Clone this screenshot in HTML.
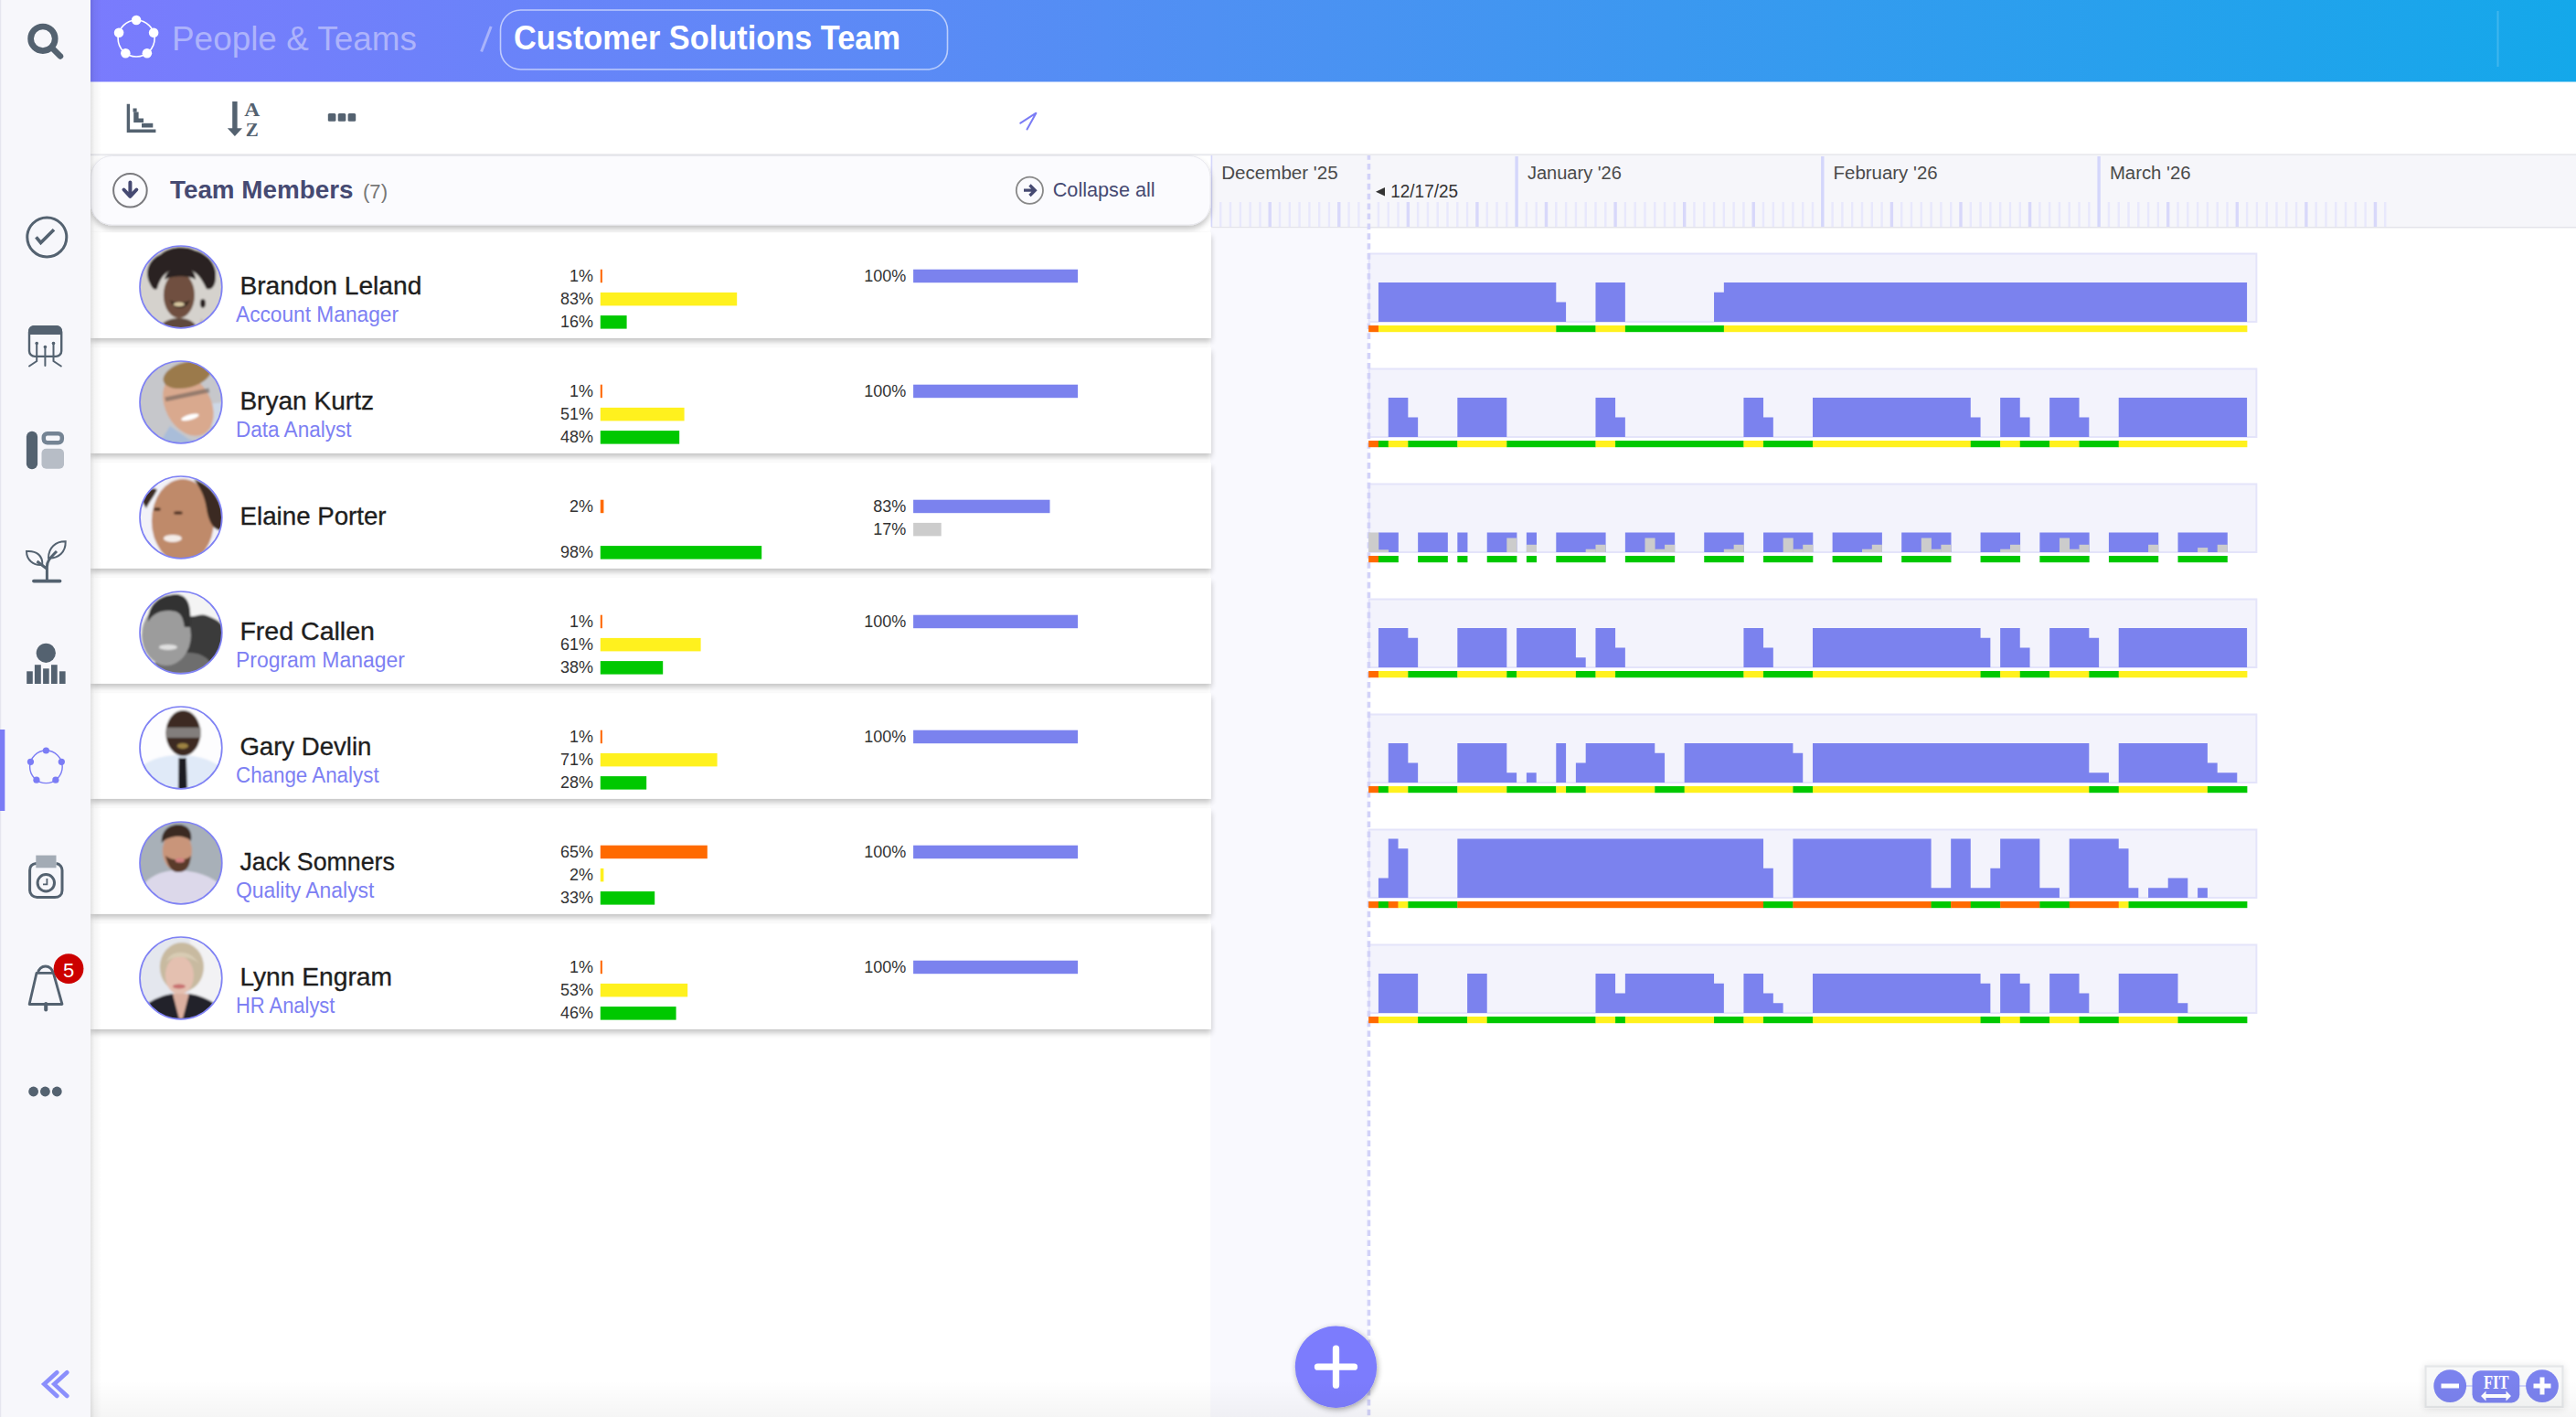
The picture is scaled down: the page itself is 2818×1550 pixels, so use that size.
<!DOCTYPE html>
<html><head><meta charset="utf-8"><title>Customer Solutions Team</title>
<style>
html,body{margin:0;padding:0;background:#fff;}
body{width:2818px;height:1550px;overflow:hidden;position:relative;font-family:"Liberation Sans", sans-serif;}
svg{position:absolute;left:0;top:0;}
svg text{font-family:"Liberation Sans", sans-serif;}
.lsh{position:absolute;left:99px;top:0;width:12px;height:1550px;background:linear-gradient(to right,rgba(0,0,0,0.11),rgba(0,0,0,0.04) 35%,rgba(0,0,0,0));}
.bsh{position:absolute;left:99px;top:1510px;width:2719px;height:40px;background:linear-gradient(to bottom,rgba(0,0,0,0),rgba(0,0,0,0.04));}
</style></head>
<body>
<svg width="2818" height="1550" viewBox="0 0 2818 1550">
<rect x="0" y="0" width="2818" height="1550" fill="#ffffff"/><rect x="0" y="0" width="99" height="1550" fill="#f7f7fb"/><rect x="0" y="0" width="1.2" height="1550" fill="#e6e6ef"/><defs><linearGradient id="hg" x1="0" y1="0" x2="1" y2="0"><stop offset="0" stop-color="#7a7bfd"/><stop offset="0.45" stop-color="#4f90f3"/><stop offset="1" stop-color="#14a8ea"/></linearGradient><linearGradient id="lsh" x1="0" y1="0" x2="1" y2="0"><stop offset="0" stop-color="#000" stop-opacity="0.11"/><stop offset="0.35" stop-color="#000" stop-opacity="0.05"/><stop offset="1" stop-color="#000" stop-opacity="0"/></linearGradient><linearGradient id="rsh" x1="0" y1="0" x2="0" y2="1"><stop offset="0" stop-color="#000" stop-opacity="0.10"/><stop offset="1" stop-color="#000" stop-opacity="0"/></linearGradient><linearGradient id="bsh" x1="0" y1="0" x2="0" y2="1"><stop offset="0" stop-color="#000" stop-opacity="0"/><stop offset="1" stop-color="#000" stop-opacity="0.05"/></linearGradient><filter id="fabsh" x="-30%" y="-30%" width="160%" height="160%"><feGaussianBlur in="SourceAlpha" stdDeviation="3"/><feOffset dx="1" dy="2"/><feComponentTransfer><feFuncA type="linear" slope="0.35"/></feComponentTransfer><feMerge><feMergeNode/><feMergeNode in="SourceGraphic"/></feMerge></filter><filter id="cardsh" x="0%" y="-20%" width="105%" height="150%"><feGaussianBlur in="SourceAlpha" stdDeviation="3.2"/><feOffset dx="0" dy="4"/><feComponentTransfer><feFuncA type="linear" slope="0.24"/></feComponentTransfer><feMerge><feMergeNode/><feMergeNode in="SourceGraphic"/></feMerge></filter><filter id="zsh" x="-20%" y="-40%" width="140%" height="180%"><feGaussianBlur in="SourceAlpha" stdDeviation="4"/><feOffset dx="0" dy="1"/><feComponentTransfer><feFuncA type="linear" slope="0.12"/></feComponentTransfer><feMerge><feMergeNode/><feMergeNode in="SourceGraphic"/></feMerge></filter></defs><rect x="99" y="0" width="2719" height="89.5" fill="url(#hg)"/><rect x="99" y="168.3" width="2719" height="2" fill="#e8e9ed"/><circle cx="149.1" cy="42" r="20" fill="none" stroke="#ffffff" stroke-width="1.6"/><circle cx="149.10" cy="22.00" r="5.3" fill="#ffffff"/><circle cx="168.12" cy="35.82" r="5.3" fill="#ffffff"/><circle cx="160.86" cy="58.18" r="5.3" fill="#ffffff"/><circle cx="137.34" cy="58.18" r="5.3" fill="#ffffff"/><circle cx="130.08" cy="35.82" r="5.3" fill="#ffffff"/><text x="188" y="55" font-size="37" fill="#adb3fb" textLength="268" lengthAdjust="spacingAndGlyphs">People &amp; Teams</text><line x1="526.6" y1="56.5" x2="537.2" y2="29" stroke="#a9b3fb" stroke-width="3"/><rect x="547.5" y="11" width="489" height="65" rx="22" ry="22" fill="none" stroke="#e4eaff" stroke-opacity="0.7" stroke-width="1.6"/><text x="562" y="54" font-size="37" fill="#ffffff" font-weight="bold" textLength="423" lengthAdjust="spacingAndGlyphs">Customer Solutions Team</text><rect x="2731.5" y="12" width="2" height="61" fill="#ffffff" fill-opacity="0.18"/><circle cx="46.9" cy="42.3" r="13.3" fill="none" stroke="#546270" stroke-width="6.7"/><line x1="57" y1="52.5" x2="66" y2="61.5" stroke="#546270" stroke-width="6.5" stroke-linecap="round"/><circle cx="51.3" cy="259.4" r="21.5" fill="none" stroke="#546270" stroke-width="3"/><polyline points="39.5,259.3 44.6,265.5 59,251.2" fill="none" stroke="#546270" stroke-width="3.6"/><rect x="32" y="357.2" width="35.2" height="32.7" rx="6" fill="none" stroke="#546270" stroke-width="2.4"/><path d="M31,366 V362 a6,6 0 0 1 6,-6 H62 a6,6 0 0 1 6,6 V366 Z" fill="#546270"/><path d="M40.2,375 V395 L32,400.5 M49.4,379 V400 M58.5,375 V395 L66.8,400.5" fill="none" stroke="#546270" stroke-width="2" stroke-linecap="round"/><circle cx="40.2" cy="375.5" r="1.8" fill="#546270"/><circle cx="49.4" cy="379.5" r="1.8" fill="#546270"/><circle cx="58.5" cy="375.5" r="1.8" fill="#546270"/><rect x="28.9" y="471.7" width="12.2" height="41.5" rx="6" fill="#546270"/><rect x="47.8" y="474.2" width="20" height="10.1" rx="4" fill="none" stroke="#758494" stroke-width="4.5"/><rect x="45.5" y="490.7" width="24.5" height="22.1" rx="5" fill="#b7bdc6"/><path d="M29,603 C40,602 47,608 46.3,618 C36,619 29,612 29,603 Z" fill="none" stroke="#546270" stroke-width="2"/><path d="M71.7,592.2 C72,604 64,611 53,610.4 C53,599 61,592 71.7,592.2 Z" fill="none" stroke="#546270" stroke-width="2"/><path d="M51.4,635 V620 C51.4,614 54,611 62,603 M40.5,614 L51,622" fill="none" stroke="#546270" stroke-width="3"/><line x1="37" y1="635.6" x2="65.5" y2="635.6" stroke="#546270" stroke-width="3.8" stroke-linecap="round"/><circle cx="50.3" cy="714.3" r="10.6" fill="#546270"/><rect x="29.2" y="734.3" width="6.6" height="13.7" fill="#546270"/><rect x="37.9" y="727.2" width="6.9" height="20.8" fill="#546270"/><rect x="47.1" y="731.3" width="6.6" height="16.7" fill="#546270"/><rect x="56" y="727.2" width="6.7" height="20.8" fill="#546270"/><rect x="65" y="734.3" width="6.6" height="13.7" fill="#546270"/><rect x="0" y="798" width="5.3" height="89" fill="#7b7cf5"/><circle cx="50.4" cy="838.8" r="17.8" fill="none" stroke="#7b7cf5" stroke-width="1.4"/><circle cx="50.40" cy="821.00" r="3.6" fill="#7b7cf5"/><circle cx="67.33" cy="833.30" r="3.6" fill="#7b7cf5"/><circle cx="60.86" cy="853.20" r="3.6" fill="#7b7cf5"/><circle cx="39.94" cy="853.20" r="3.6" fill="#7b7cf5"/><circle cx="33.47" cy="833.30" r="3.6" fill="#7b7cf5"/><path d="M39.5,944.5 H40 M61.5,944.5 C66,945 68,949 68,952 V974 C68,979 64.5,981.5 60,981.5 H40.5 C36,981.5 32.6,978 32.6,974 V952 C32.6,948 35,945 39.5,944.5" fill="none" stroke="#546270" stroke-width="3"/><rect x="39.3" y="935.6" width="22.2" height="13.7" fill="#a3abb5"/><circle cx="50.3" cy="965.8" r="9.2" fill="none" stroke="#546270" stroke-width="3"/><path d="M51.4,961 V967.4 H47" fill="none" stroke="#546270" stroke-width="1.8"/><path d="M40,1064.4 H58.4 L68,1098.5 H32.1 Z" fill="none" stroke="#546270" stroke-width="2.8" stroke-linejoin="round"/><path d="M41.5,1064.4 A8.3,8.3 0 0 1 58,1064.4" fill="none" stroke="#546270" stroke-width="2.8"/><line x1="50.2" y1="1098" x2="50.2" y2="1104.5" stroke="#546270" stroke-width="4" stroke-linecap="round"/><circle cx="75.05" cy="1059.6" r="16.4" fill="#cc0000"/><text x="75.2" y="1069" font-size="22" fill="#ffffff" text-anchor="middle">5</text><circle cx="36.6" cy="1194" r="5.4" fill="#546270"/><circle cx="49.4" cy="1194" r="5.4" fill="#546270"/><circle cx="62.3" cy="1194" r="5.4" fill="#546270"/><path d="M62.3,1501.3 L48.3,1514.1 L62.3,1527 M73.3,1501.3 L59.3,1514.1 L73.3,1527" fill="none" stroke="#8b8ffc" stroke-width="4.6" stroke-linecap="round" stroke-linejoin="miter"/><path d="M140.4,113.8 V143.2 H170.4" fill="none" stroke="#546270" stroke-width="3.4"/><rect x="145.5" y="118.5" width="4.1" height="4.1" fill="#546270"/><path d="M146.2,122.6 H151.6 V129.5 H157 V134 H146.2 Z" fill="#546270"/><rect x="155" y="134.8" width="12.3" height="4.7" fill="#546270"/><rect x="254.2" y="111" width="5.4" height="30" fill="#546270"/><path d="M248.8,140.3 H265 L256.9,149 Z" fill="#546270"/><text x="275.8" y="126.7" font-size="22" fill="#546270" font-weight="bold" text-anchor="middle" textLength="17" lengthAdjust="spacingAndGlyphs" style="font-family:Liberation Serif">A</text><text x="275.8" y="149" font-size="22" fill="#546270" font-weight="bold" text-anchor="middle" textLength="14" lengthAdjust="spacingAndGlyphs" style="font-family:Liberation Serif">Z</text><rect x="358.8" y="124" width="8.6" height="8.8" rx="1.6" fill="#546270"/><rect x="369.7" y="124" width="8.6" height="8.8" rx="1.6" fill="#546270"/><rect x="380.6" y="124" width="8.6" height="8.8" rx="1.6" fill="#546270"/><path d="M1116.3,134.6 L1133.4,123.7 L1123.5,141.5" fill="none" stroke="#7b7cf5" stroke-width="2" stroke-linecap="round" stroke-linejoin="round"/>
<rect x="1325" y="170" width="1493" height="79" fill="#f6f6fa"/><rect x="1325" y="248" width="1493" height="1.5" fill="#e3e3ea"/><rect x="1324.2" y="249.5" width="172.95" height="1300.5" fill="#f9f9fe"/><rect x="1334.00" y="221" width="2.4" height="27" fill="#e8e8fc"/><rect x="1344.79" y="221" width="2.4" height="27" fill="#e8e8fc"/><rect x="1355.59" y="221" width="2.4" height="27" fill="#e8e8fc"/><rect x="1366.39" y="221" width="2.4" height="27" fill="#e8e8fc"/><rect x="1377.18" y="221" width="2.4" height="27" fill="#e8e8fc"/><rect x="1387.48" y="221" width="3.4" height="27" fill="#d8d8fa"/><rect x="1398.78" y="221" width="2.4" height="27" fill="#e8e8fc"/><rect x="1409.58" y="221" width="2.4" height="27" fill="#e8e8fc"/><rect x="1420.37" y="221" width="2.4" height="27" fill="#e8e8fc"/><rect x="1431.17" y="221" width="2.4" height="27" fill="#e8e8fc"/><rect x="1441.97" y="221" width="2.4" height="27" fill="#e8e8fc"/><rect x="1452.76" y="221" width="2.4" height="27" fill="#e8e8fc"/><rect x="1463.06" y="221" width="3.4" height="27" fill="#d8d8fa"/><rect x="1474.36" y="221" width="2.4" height="27" fill="#e8e8fc"/><rect x="1485.15" y="221" width="2.4" height="27" fill="#e8e8fc"/><rect x="1506.75" y="221" width="2.4" height="27" fill="#e8e8fc"/><rect x="1517.55" y="221" width="2.4" height="27" fill="#e8e8fc"/><rect x="1528.34" y="221" width="2.4" height="27" fill="#e8e8fc"/><rect x="1538.64" y="221" width="3.4" height="27" fill="#d8d8fa"/><rect x="1549.94" y="221" width="2.4" height="27" fill="#e8e8fc"/><rect x="1560.73" y="221" width="2.4" height="27" fill="#e8e8fc"/><rect x="1571.53" y="221" width="2.4" height="27" fill="#e8e8fc"/><rect x="1582.33" y="221" width="2.4" height="27" fill="#e8e8fc"/><rect x="1593.12" y="221" width="2.4" height="27" fill="#e8e8fc"/><rect x="1603.92" y="221" width="2.4" height="27" fill="#e8e8fc"/><rect x="1614.22" y="221" width="3.4" height="27" fill="#d8d8fa"/><rect x="1625.52" y="221" width="2.4" height="27" fill="#e8e8fc"/><rect x="1636.31" y="221" width="2.4" height="27" fill="#e8e8fc"/><rect x="1647.11" y="221" width="2.4" height="27" fill="#e8e8fc"/><rect x="1657.41" y="171" width="3.4" height="77" fill="#d4d6fb"/><rect x="1668.70" y="221" width="2.4" height="27" fill="#e8e8fc"/><rect x="1679.50" y="221" width="2.4" height="27" fill="#e8e8fc"/><rect x="1689.80" y="221" width="3.4" height="27" fill="#d8d8fa"/><rect x="1701.10" y="221" width="2.4" height="27" fill="#e8e8fc"/><rect x="1711.89" y="221" width="2.4" height="27" fill="#e8e8fc"/><rect x="1722.69" y="221" width="2.4" height="27" fill="#e8e8fc"/><rect x="1733.49" y="221" width="2.4" height="27" fill="#e8e8fc"/><rect x="1744.28" y="221" width="2.4" height="27" fill="#e8e8fc"/><rect x="1755.08" y="221" width="2.4" height="27" fill="#e8e8fc"/><rect x="1765.38" y="221" width="3.4" height="27" fill="#d8d8fa"/><rect x="1776.67" y="221" width="2.4" height="27" fill="#e8e8fc"/><rect x="1787.47" y="221" width="2.4" height="27" fill="#e8e8fc"/><rect x="1798.27" y="221" width="2.4" height="27" fill="#e8e8fc"/><rect x="1809.07" y="221" width="2.4" height="27" fill="#e8e8fc"/><rect x="1819.86" y="221" width="2.4" height="27" fill="#e8e8fc"/><rect x="1830.66" y="221" width="2.4" height="27" fill="#e8e8fc"/><rect x="1840.96" y="221" width="3.4" height="27" fill="#d8d8fa"/><rect x="1852.25" y="221" width="2.4" height="27" fill="#e8e8fc"/><rect x="1863.05" y="221" width="2.4" height="27" fill="#e8e8fc"/><rect x="1873.85" y="221" width="2.4" height="27" fill="#e8e8fc"/><rect x="1884.64" y="221" width="2.4" height="27" fill="#e8e8fc"/><rect x="1895.44" y="221" width="2.4" height="27" fill="#e8e8fc"/><rect x="1906.24" y="221" width="2.4" height="27" fill="#e8e8fc"/><rect x="1916.54" y="221" width="3.4" height="27" fill="#d8d8fa"/><rect x="1927.83" y="221" width="2.4" height="27" fill="#e8e8fc"/><rect x="1938.63" y="221" width="2.4" height="27" fill="#e8e8fc"/><rect x="1949.43" y="221" width="2.4" height="27" fill="#e8e8fc"/><rect x="1960.22" y="221" width="2.4" height="27" fill="#e8e8fc"/><rect x="1971.02" y="221" width="2.4" height="27" fill="#e8e8fc"/><rect x="1981.82" y="221" width="2.4" height="27" fill="#e8e8fc"/><rect x="1992.11" y="171" width="3.4" height="77" fill="#d4d6fb"/><rect x="2003.41" y="221" width="2.4" height="27" fill="#e8e8fc"/><rect x="2014.21" y="221" width="2.4" height="27" fill="#e8e8fc"/><rect x="2025.01" y="221" width="2.4" height="27" fill="#e8e8fc"/><rect x="2035.80" y="221" width="2.4" height="27" fill="#e8e8fc"/><rect x="2046.60" y="221" width="2.4" height="27" fill="#e8e8fc"/><rect x="2057.40" y="221" width="2.4" height="27" fill="#e8e8fc"/><rect x="2067.69" y="221" width="3.4" height="27" fill="#d8d8fa"/><rect x="2078.99" y="221" width="2.4" height="27" fill="#e8e8fc"/><rect x="2089.79" y="221" width="2.4" height="27" fill="#e8e8fc"/><rect x="2100.58" y="221" width="2.4" height="27" fill="#e8e8fc"/><rect x="2111.38" y="221" width="2.4" height="27" fill="#e8e8fc"/><rect x="2122.18" y="221" width="2.4" height="27" fill="#e8e8fc"/><rect x="2132.98" y="221" width="2.4" height="27" fill="#e8e8fc"/><rect x="2143.27" y="221" width="3.4" height="27" fill="#d8d8fa"/><rect x="2154.57" y="221" width="2.4" height="27" fill="#e8e8fc"/><rect x="2165.37" y="221" width="2.4" height="27" fill="#e8e8fc"/><rect x="2176.16" y="221" width="2.4" height="27" fill="#e8e8fc"/><rect x="2186.96" y="221" width="2.4" height="27" fill="#e8e8fc"/><rect x="2197.76" y="221" width="2.4" height="27" fill="#e8e8fc"/><rect x="2208.55" y="221" width="2.4" height="27" fill="#e8e8fc"/><rect x="2218.85" y="221" width="3.4" height="27" fill="#d8d8fa"/><rect x="2230.15" y="221" width="2.4" height="27" fill="#e8e8fc"/><rect x="2240.95" y="221" width="2.4" height="27" fill="#e8e8fc"/><rect x="2251.74" y="221" width="2.4" height="27" fill="#e8e8fc"/><rect x="2262.54" y="221" width="2.4" height="27" fill="#e8e8fc"/><rect x="2273.34" y="221" width="2.4" height="27" fill="#e8e8fc"/><rect x="2284.13" y="221" width="2.4" height="27" fill="#e8e8fc"/><rect x="2294.43" y="171" width="3.4" height="77" fill="#d4d6fb"/><rect x="2305.73" y="221" width="2.4" height="27" fill="#e8e8fc"/><rect x="2316.52" y="221" width="2.4" height="27" fill="#e8e8fc"/><rect x="2327.32" y="221" width="2.4" height="27" fill="#e8e8fc"/><rect x="2338.12" y="221" width="2.4" height="27" fill="#e8e8fc"/><rect x="2348.92" y="221" width="2.4" height="27" fill="#e8e8fc"/><rect x="2359.71" y="221" width="2.4" height="27" fill="#e8e8fc"/><rect x="2370.01" y="221" width="3.4" height="27" fill="#d8d8fa"/><rect x="2381.31" y="221" width="2.4" height="27" fill="#e8e8fc"/><rect x="2392.10" y="221" width="2.4" height="27" fill="#e8e8fc"/><rect x="2402.90" y="221" width="2.4" height="27" fill="#e8e8fc"/><rect x="2413.70" y="221" width="2.4" height="27" fill="#e8e8fc"/><rect x="2424.49" y="221" width="2.4" height="27" fill="#e8e8fc"/><rect x="2435.29" y="221" width="2.4" height="27" fill="#e8e8fc"/><rect x="2445.59" y="221" width="3.4" height="27" fill="#d8d8fa"/><rect x="2456.89" y="221" width="2.4" height="27" fill="#e8e8fc"/><rect x="2467.68" y="221" width="2.4" height="27" fill="#e8e8fc"/><rect x="2478.48" y="221" width="2.4" height="27" fill="#e8e8fc"/><rect x="2489.28" y="221" width="2.4" height="27" fill="#e8e8fc"/><rect x="2500.07" y="221" width="2.4" height="27" fill="#e8e8fc"/><rect x="2510.87" y="221" width="2.4" height="27" fill="#e8e8fc"/><rect x="2521.17" y="221" width="3.4" height="27" fill="#d8d8fa"/><rect x="2532.46" y="221" width="2.4" height="27" fill="#e8e8fc"/><rect x="2543.26" y="221" width="2.4" height="27" fill="#e8e8fc"/><rect x="2554.06" y="221" width="2.4" height="27" fill="#e8e8fc"/><rect x="2564.86" y="221" width="2.4" height="27" fill="#e8e8fc"/><rect x="2575.65" y="221" width="2.4" height="27" fill="#e8e8fc"/><rect x="2586.45" y="221" width="2.4" height="27" fill="#e8e8fc"/><rect x="2596.75" y="221" width="3.4" height="27" fill="#d8d8fa"/><rect x="2608.04" y="221" width="2.4" height="27" fill="#e8e8fc"/><rect x="1324.6" y="170" width="1.6" height="78" fill="#d4d6fb"/><text x="1336.2" y="195.5" font-size="19.5" fill="#4a4a4a" textLength="127.5" lengthAdjust="spacingAndGlyphs">December '25</text><text x="1670.9" y="195.5" font-size="19.5" fill="#4a4a4a" textLength="103" lengthAdjust="spacingAndGlyphs">January '26</text><text x="2005.6" y="195.5" font-size="19.5" fill="#4a4a4a" textLength="114" lengthAdjust="spacingAndGlyphs">February '26</text><text x="2307.9" y="195.5" font-size="19.5" fill="#4a4a4a" textLength="88.7" lengthAdjust="spacingAndGlyphs">March '26</text><path d="M1505,209.8 L1515,205 L1515,214.6 Z" fill="#333"/><text x="1521.3" y="216" font-size="19.5" fill="#333333" textLength="73.7" lengthAdjust="spacingAndGlyphs">12/17/25</text><rect x="1497.65" y="277.5" width="970.73" height="74.5" fill="#f3f3fc" stroke="#e4e4fa" stroke-width="2"/><rect x="1497.65" y="403.5" width="970.73" height="74.5" fill="#f3f3fc" stroke="#e4e4fa" stroke-width="2"/><rect x="1497.65" y="529.5" width="970.73" height="74.5" fill="#f3f3fc" stroke="#e4e4fa" stroke-width="2"/><rect x="1497.65" y="655.5" width="970.73" height="74.5" fill="#f3f3fc" stroke="#e4e4fa" stroke-width="2"/><rect x="1497.65" y="781.5" width="970.73" height="74.5" fill="#f3f3fc" stroke="#e4e4fa" stroke-width="2"/><rect x="1497.65" y="907.5" width="970.73" height="74.5" fill="#f3f3fc" stroke="#e4e4fa" stroke-width="2"/><rect x="1497.65" y="1033.5" width="970.73" height="74.5" fill="#f3f3fc" stroke="#e4e4fa" stroke-width="2"/><line x1="1497.45" y1="170" x2="1497.45" y2="1550" stroke="#d2d2f8" stroke-width="3.6" stroke-dasharray="6.6 4.302" stroke-dashoffset="1.92"/><path d="M1507.95,352.00 L1507.95,309.00 L1702.30,309.00 L1702.30,330.50 L1713.09,330.50 L1713.09,352.00 Z M1745.48,352.00 L1745.48,309.00 L1777.87,309.00 L1777.87,352.00 Z M1875.05,352.00 L1875.05,319.75 L1885.84,319.75 L1885.84,309.00 L2458.09,309.00 L2458.09,352.00 Z " fill="#7b82ee"/><rect x="1497.15" y="356" width="11.10" height="7.2" fill="#ff6a00"/><rect x="1507.95" y="356" width="194.65" height="7.2" fill="#fff11e"/><rect x="1702.30" y="356" width="43.49" height="7.2" fill="#00c800"/><rect x="1745.48" y="356" width="32.69" height="7.2" fill="#fff11e"/><rect x="1777.87" y="356" width="108.27" height="7.2" fill="#00c800"/><rect x="1885.84" y="356" width="572.54" height="7.2" fill="#fff11e"/><path d="M1518.75,478.00 L1518.75,435.00 L1540.34,435.00 L1540.34,456.50 L1551.14,456.50 L1551.14,478.00 Z M1594.33,478.00 L1594.33,435.00 L1648.31,435.00 L1648.31,478.00 Z M1745.48,478.00 L1745.48,435.00 L1767.08,435.00 L1767.08,456.50 L1777.87,456.50 L1777.87,478.00 Z M1907.44,478.00 L1907.44,435.00 L1929.03,435.00 L1929.03,456.50 L1939.83,456.50 L1939.83,478.00 Z M1983.02,478.00 L1983.02,435.00 L2155.77,435.00 L2155.77,456.50 L2166.57,456.50 L2166.57,478.00 Z M2188.16,478.00 L2188.16,435.00 L2209.75,435.00 L2209.75,456.50 L2220.55,456.50 L2220.55,478.00 Z M2242.14,478.00 L2242.14,435.00 L2274.54,435.00 L2274.54,456.50 L2285.33,456.50 L2285.33,478.00 Z M2317.72,478.00 L2317.72,435.00 L2458.09,435.00 L2458.09,478.00 Z " fill="#7b82ee"/><rect x="1497.15" y="482" width="11.10" height="7.2" fill="#ff6a00"/><rect x="1507.95" y="482" width="11.10" height="7.2" fill="#00c800"/><rect x="1518.75" y="482" width="21.89" height="7.2" fill="#fff11e"/><rect x="1540.34" y="482" width="54.28" height="7.2" fill="#00c800"/><rect x="1594.33" y="482" width="54.29" height="7.2" fill="#fff11e"/><rect x="1648.31" y="482" width="97.47" height="7.2" fill="#00c800"/><rect x="1745.48" y="482" width="21.89" height="7.2" fill="#fff11e"/><rect x="1767.08" y="482" width="140.66" height="7.2" fill="#00c800"/><rect x="1907.44" y="482" width="21.89" height="7.2" fill="#fff11e"/><rect x="1929.03" y="482" width="54.29" height="7.2" fill="#00c800"/><rect x="1983.02" y="482" width="173.05" height="7.2" fill="#fff11e"/><rect x="2155.77" y="482" width="32.69" height="7.2" fill="#00c800"/><rect x="2188.16" y="482" width="21.89" height="7.2" fill="#fff11e"/><rect x="2209.75" y="482" width="32.69" height="7.2" fill="#00c800"/><rect x="2242.14" y="482" width="32.69" height="7.2" fill="#fff11e"/><rect x="2274.54" y="482" width="43.49" height="7.2" fill="#00c800"/><rect x="2317.72" y="482" width="140.66" height="7.2" fill="#fff11e"/><rect x="1507.95" y="582.50" width="21.89" height="21.5" fill="#7b82ee"/><rect x="1551.14" y="582.50" width="32.69" height="21.5" fill="#7b82ee"/><rect x="1594.33" y="582.50" width="11.10" height="21.5" fill="#7b82ee"/><rect x="1626.72" y="582.50" width="32.69" height="21.5" fill="#7b82ee"/><rect x="1669.90" y="582.50" width="11.10" height="21.5" fill="#7b82ee"/><rect x="1702.30" y="582.50" width="54.29" height="21.5" fill="#7b82ee"/><rect x="1777.87" y="582.50" width="54.28" height="21.5" fill="#7b82ee"/><rect x="1864.25" y="582.50" width="43.49" height="21.5" fill="#7b82ee"/><rect x="1929.03" y="582.50" width="54.29" height="21.5" fill="#7b82ee"/><rect x="2004.61" y="582.50" width="54.28" height="21.5" fill="#7b82ee"/><rect x="2080.19" y="582.50" width="54.29" height="21.5" fill="#7b82ee"/><rect x="2166.57" y="582.50" width="43.49" height="21.5" fill="#7b82ee"/><rect x="2231.35" y="582.50" width="54.29" height="21.5" fill="#7b82ee"/><rect x="2306.93" y="582.50" width="54.29" height="21.5" fill="#7b82ee"/><rect x="2382.51" y="582.50" width="54.28" height="21.5" fill="#7b82ee"/><rect x="1497.15" y="582.50" width="11.10" height="21.50" fill="#cccccc"/><rect x="1507.95" y="601.30" width="11.10" height="2.70" fill="#cccccc"/><rect x="1648.31" y="588.50" width="11.10" height="15.50" fill="#cccccc"/><rect x="1669.90" y="595.80" width="11.10" height="8.20" fill="#cccccc"/><rect x="1734.69" y="600.70" width="11.10" height="3.30" fill="#cccccc"/><rect x="1745.48" y="595.80" width="11.10" height="8.20" fill="#cccccc"/><rect x="1799.47" y="588.50" width="11.10" height="15.50" fill="#cccccc"/><rect x="1810.27" y="600.70" width="11.10" height="3.30" fill="#cccccc"/><rect x="1821.06" y="595.80" width="11.10" height="8.20" fill="#cccccc"/><rect x="1885.84" y="600.70" width="11.10" height="3.30" fill="#cccccc"/><rect x="1896.64" y="595.80" width="11.10" height="8.20" fill="#cccccc"/><rect x="1950.63" y="588.50" width="11.10" height="15.50" fill="#cccccc"/><rect x="1961.42" y="600.70" width="11.10" height="3.30" fill="#cccccc"/><rect x="1972.22" y="595.80" width="11.10" height="8.20" fill="#cccccc"/><rect x="2037.00" y="600.70" width="11.10" height="3.30" fill="#cccccc"/><rect x="2047.80" y="595.80" width="11.10" height="8.20" fill="#cccccc"/><rect x="2101.78" y="588.50" width="11.10" height="15.50" fill="#cccccc"/><rect x="2112.58" y="600.70" width="11.10" height="3.30" fill="#cccccc"/><rect x="2123.38" y="595.80" width="11.10" height="8.20" fill="#cccccc"/><rect x="2188.16" y="600.70" width="11.10" height="3.30" fill="#cccccc"/><rect x="2198.96" y="595.80" width="11.10" height="8.20" fill="#cccccc"/><rect x="2252.94" y="588.50" width="11.10" height="15.50" fill="#cccccc"/><rect x="2263.74" y="600.70" width="11.10" height="3.30" fill="#cccccc"/><rect x="2274.54" y="595.80" width="11.10" height="8.20" fill="#cccccc"/><rect x="2350.12" y="595.80" width="11.10" height="8.20" fill="#cccccc"/><rect x="2404.10" y="599.10" width="11.10" height="4.90" fill="#cccccc"/><rect x="2425.69" y="595.80" width="11.10" height="8.20" fill="#cccccc"/><rect x="1497.15" y="608" width="11.10" height="7.2" fill="#ff6a00"/><rect x="1507.95" y="608" width="21.89" height="7.2" fill="#00c800"/><rect x="1551.14" y="608" width="32.69" height="7.2" fill="#00c800"/><rect x="1594.33" y="608" width="11.10" height="7.2" fill="#00c800"/><rect x="1626.72" y="608" width="32.69" height="7.2" fill="#00c800"/><rect x="1669.90" y="608" width="11.10" height="7.2" fill="#00c800"/><rect x="1702.30" y="608" width="54.29" height="7.2" fill="#00c800"/><rect x="1777.87" y="608" width="54.28" height="7.2" fill="#00c800"/><rect x="1864.25" y="608" width="43.49" height="7.2" fill="#00c800"/><rect x="1929.03" y="608" width="54.29" height="7.2" fill="#00c800"/><rect x="2004.61" y="608" width="54.28" height="7.2" fill="#00c800"/><rect x="2080.19" y="608" width="54.29" height="7.2" fill="#00c800"/><rect x="2166.57" y="608" width="43.49" height="7.2" fill="#00c800"/><rect x="2231.35" y="608" width="54.29" height="7.2" fill="#00c800"/><rect x="2306.93" y="608" width="54.29" height="7.2" fill="#00c800"/><rect x="2382.51" y="608" width="54.28" height="7.2" fill="#00c800"/><path d="M1507.95,730.00 L1507.95,687.00 L1540.34,687.00 L1540.34,697.75 L1551.14,697.75 L1551.14,730.00 Z M1594.33,730.00 L1594.33,687.00 L1648.31,687.00 L1648.31,730.00 Z M1659.11,730.00 L1659.11,687.00 L1723.89,687.00 L1723.89,719.25 L1734.69,719.25 L1734.69,730.00 Z M1745.48,730.00 L1745.48,687.00 L1767.08,687.00 L1767.08,708.50 L1777.87,708.50 L1777.87,730.00 Z M1907.44,730.00 L1907.44,687.00 L1929.03,687.00 L1929.03,708.50 L1939.83,708.50 L1939.83,730.00 Z M1983.02,730.00 L1983.02,687.00 L2166.57,687.00 L2166.57,697.75 L2177.36,697.75 L2177.36,730.00 Z M2188.16,730.00 L2188.16,687.00 L2209.75,687.00 L2209.75,708.50 L2220.55,708.50 L2220.55,730.00 Z M2242.14,730.00 L2242.14,687.00 L2285.33,687.00 L2285.33,697.75 L2296.13,697.75 L2296.13,730.00 Z M2317.72,730.00 L2317.72,687.00 L2458.09,687.00 L2458.09,730.00 Z " fill="#7b82ee"/><rect x="1497.15" y="734" width="11.10" height="7.2" fill="#ff6a00"/><rect x="1507.95" y="734" width="32.69" height="7.2" fill="#fff11e"/><rect x="1540.34" y="734" width="54.28" height="7.2" fill="#00c800"/><rect x="1594.33" y="734" width="54.29" height="7.2" fill="#fff11e"/><rect x="1648.31" y="734" width="11.10" height="7.2" fill="#00c800"/><rect x="1659.11" y="734" width="65.08" height="7.2" fill="#fff11e"/><rect x="1723.89" y="734" width="21.89" height="7.2" fill="#00c800"/><rect x="1745.48" y="734" width="21.89" height="7.2" fill="#fff11e"/><rect x="1767.08" y="734" width="140.66" height="7.2" fill="#00c800"/><rect x="1907.44" y="734" width="21.89" height="7.2" fill="#fff11e"/><rect x="1929.03" y="734" width="54.29" height="7.2" fill="#00c800"/><rect x="1983.02" y="734" width="183.85" height="7.2" fill="#fff11e"/><rect x="2166.57" y="734" width="21.89" height="7.2" fill="#00c800"/><rect x="2188.16" y="734" width="21.89" height="7.2" fill="#fff11e"/><rect x="2209.75" y="734" width="32.69" height="7.2" fill="#00c800"/><rect x="2242.14" y="734" width="43.49" height="7.2" fill="#fff11e"/><rect x="2285.33" y="734" width="32.69" height="7.2" fill="#00c800"/><rect x="2317.72" y="734" width="140.66" height="7.2" fill="#fff11e"/><path d="M1518.75,856.00 L1518.75,813.00 L1540.34,813.00 L1540.34,834.50 L1551.14,834.50 L1551.14,856.00 Z M1594.33,856.00 L1594.33,813.00 L1648.31,813.00 L1648.31,845.25 L1659.11,845.25 L1659.11,856.00 Z M1669.90,856.00 L1669.90,845.25 L1680.70,845.25 L1680.70,856.00 Z M1702.30,856.00 L1702.30,813.00 L1713.09,813.00 L1713.09,856.00 Z M1723.89,856.00 L1723.89,834.50 L1734.69,834.50 L1734.69,813.00 L1810.27,813.00 L1810.27,823.75 L1821.06,823.75 L1821.06,856.00 Z M1842.66,856.00 L1842.66,813.00 L1961.42,813.00 L1961.42,823.75 L1972.22,823.75 L1972.22,856.00 Z M1983.02,856.00 L1983.02,813.00 L2285.33,813.00 L2285.33,845.25 L2306.93,845.25 L2306.93,856.00 Z M2317.72,856.00 L2317.72,813.00 L2414.90,813.00 L2414.90,834.50 L2425.69,834.50 L2425.69,845.25 L2447.29,845.25 L2447.29,856.00 Z " fill="#7b82ee"/><rect x="1497.15" y="860" width="11.10" height="7.2" fill="#ff6a00"/><rect x="1507.95" y="860" width="11.10" height="7.2" fill="#00c800"/><rect x="1518.75" y="860" width="21.89" height="7.2" fill="#fff11e"/><rect x="1540.34" y="860" width="54.28" height="7.2" fill="#00c800"/><rect x="1594.33" y="860" width="54.29" height="7.2" fill="#fff11e"/><rect x="1648.31" y="860" width="54.28" height="7.2" fill="#00c800"/><rect x="1702.30" y="860" width="11.10" height="7.2" fill="#fff11e"/><rect x="1713.09" y="860" width="21.89" height="7.2" fill="#00c800"/><rect x="1734.69" y="860" width="75.88" height="7.2" fill="#fff11e"/><rect x="1810.27" y="860" width="32.69" height="7.2" fill="#00c800"/><rect x="1842.66" y="860" width="119.07" height="7.2" fill="#fff11e"/><rect x="1961.42" y="860" width="21.89" height="7.2" fill="#00c800"/><rect x="1983.02" y="860" width="302.62" height="7.2" fill="#fff11e"/><rect x="2285.33" y="860" width="32.69" height="7.2" fill="#00c800"/><rect x="2317.72" y="860" width="97.47" height="7.2" fill="#fff11e"/><rect x="2414.90" y="860" width="43.49" height="7.2" fill="#00c800"/><path d="M1507.95,982.00 L1507.95,960.50 L1518.75,960.50 L1518.75,917.50 L1529.54,917.50 L1529.54,928.25 L1540.34,928.25 L1540.34,982.00 Z M1594.33,982.00 L1594.33,917.50 L1929.03,917.50 L1929.03,949.75 L1939.83,949.75 L1939.83,982.00 Z M1961.42,982.00 L1961.42,917.50 L2112.58,917.50 L2112.58,971.25 L2134.18,971.25 L2134.18,917.50 L2155.77,917.50 L2155.77,971.25 L2177.36,971.25 L2177.36,949.75 L2188.16,949.75 L2188.16,917.50 L2231.35,917.50 L2231.35,971.25 L2252.94,971.25 L2252.94,982.00 Z M2263.74,982.00 L2263.74,917.50 L2317.72,917.50 L2317.72,928.25 L2328.52,928.25 L2328.52,971.25 L2339.32,971.25 L2339.32,982.00 Z M2350.12,982.00 L2350.12,971.25 L2371.71,971.25 L2371.71,960.50 L2393.30,960.50 L2393.30,982.00 Z M2404.10,982.00 L2404.10,971.25 L2414.90,971.25 L2414.90,982.00 Z " fill="#7b82ee"/><rect x="1497.15" y="986" width="11.10" height="7.2" fill="#ff6a00"/><rect x="1507.95" y="986" width="11.10" height="7.2" fill="#00c800"/><rect x="1518.75" y="986" width="11.10" height="7.2" fill="#ff6a00"/><rect x="1529.54" y="986" width="11.10" height="7.2" fill="#fff11e"/><rect x="1540.34" y="986" width="54.28" height="7.2" fill="#00c800"/><rect x="1594.33" y="986" width="335.01" height="7.2" fill="#ff6a00"/><rect x="1929.03" y="986" width="32.69" height="7.2" fill="#00c800"/><rect x="1961.42" y="986" width="151.46" height="7.2" fill="#ff6a00"/><rect x="2112.58" y="986" width="21.89" height="7.2" fill="#00c800"/><rect x="2134.18" y="986" width="21.89" height="7.2" fill="#ff6a00"/><rect x="2155.77" y="986" width="32.69" height="7.2" fill="#00c800"/><rect x="2188.16" y="986" width="43.49" height="7.2" fill="#ff6a00"/><rect x="2231.35" y="986" width="32.69" height="7.2" fill="#00c800"/><rect x="2263.74" y="986" width="54.29" height="7.2" fill="#ff6a00"/><rect x="2317.72" y="986" width="11.10" height="7.2" fill="#fff11e"/><rect x="2328.52" y="986" width="129.86" height="7.2" fill="#00c800"/><path d="M1507.95,1108.00 L1507.95,1065.00 L1551.14,1065.00 L1551.14,1108.00 Z M1605.12,1108.00 L1605.12,1065.00 L1626.72,1065.00 L1626.72,1108.00 Z M1745.48,1108.00 L1745.48,1065.00 L1767.08,1065.00 L1767.08,1086.50 L1777.87,1086.50 L1777.87,1065.00 L1875.05,1065.00 L1875.05,1075.75 L1885.84,1075.75 L1885.84,1108.00 Z M1907.44,1108.00 L1907.44,1065.00 L1929.03,1065.00 L1929.03,1086.50 L1939.83,1086.50 L1939.83,1097.25 L1950.63,1097.25 L1950.63,1108.00 Z M1983.02,1108.00 L1983.02,1065.00 L2166.57,1065.00 L2166.57,1075.75 L2177.36,1075.75 L2177.36,1108.00 Z M2188.16,1108.00 L2188.16,1065.00 L2209.75,1065.00 L2209.75,1075.75 L2220.55,1075.75 L2220.55,1108.00 Z M2242.14,1108.00 L2242.14,1065.00 L2274.54,1065.00 L2274.54,1086.50 L2285.33,1086.50 L2285.33,1108.00 Z M2317.72,1108.00 L2317.72,1065.00 L2382.51,1065.00 L2382.51,1097.25 L2393.30,1097.25 L2393.30,1108.00 Z " fill="#7b82ee"/><rect x="1497.15" y="1112" width="11.10" height="7.2" fill="#ff6a00"/><rect x="1507.95" y="1112" width="43.49" height="7.2" fill="#fff11e"/><rect x="1551.14" y="1112" width="54.28" height="7.2" fill="#00c800"/><rect x="1605.12" y="1112" width="21.89" height="7.2" fill="#fff11e"/><rect x="1626.72" y="1112" width="119.07" height="7.2" fill="#00c800"/><rect x="1745.48" y="1112" width="21.89" height="7.2" fill="#fff11e"/><rect x="1767.08" y="1112" width="11.10" height="7.2" fill="#00c800"/><rect x="1777.87" y="1112" width="97.47" height="7.2" fill="#fff11e"/><rect x="1875.05" y="1112" width="32.69" height="7.2" fill="#00c800"/><rect x="1907.44" y="1112" width="21.89" height="7.2" fill="#fff11e"/><rect x="1929.03" y="1112" width="54.29" height="7.2" fill="#00c800"/><rect x="1983.02" y="1112" width="183.85" height="7.2" fill="#fff11e"/><rect x="2166.57" y="1112" width="21.89" height="7.2" fill="#00c800"/><rect x="2188.16" y="1112" width="21.89" height="7.2" fill="#fff11e"/><rect x="2209.75" y="1112" width="32.69" height="7.2" fill="#00c800"/><rect x="2242.14" y="1112" width="32.69" height="7.2" fill="#fff11e"/><rect x="2274.54" y="1112" width="43.49" height="7.2" fill="#00c800"/><rect x="2317.72" y="1112" width="65.08" height="7.2" fill="#fff11e"/><rect x="2382.51" y="1112" width="75.88" height="7.2" fill="#00c800"/><g filter="url(#fabsh)"><circle cx="1461.5" cy="1495.2" r="44.7" fill="#7b7bfd"/></g><path d="M1441.5,1495.2 H1481.5 M1461.5,1475.2 V1515.2" stroke="#fff" stroke-width="7.3" stroke-linecap="round"/><rect x="2653.5" y="1494.5" width="150" height="44.5" fill="#f7f8f8" stroke="#e4e6e8" stroke-width="2.2" filter="url(#zsh)"/><line x1="2695" y1="1516" x2="2770" y2="1516" stroke="#d0d4f8" stroke-width="2"/><circle cx="2680.2" cy="1516.1" r="17.9" fill="#7b82ee"/><rect x="2670.5" y="1513.5" width="19.5" height="5" fill="#fff"/><rect x="2704.5" y="1499.3" width="51.8" height="35.1" rx="9" fill="#7b82ee"/><text x="2730.8" y="1518.7" font-size="20" fill="#fff" font-weight="bold" text-anchor="middle" textLength="27.6" lengthAdjust="spacingAndGlyphs" style="font-family:Liberation Serif">FIT</text><path d="M2714,1527 L2719.5,1521.5 V1525 H2741.5 V1521.5 L2747,1527 L2741.5,1532.5 V1529 H2719.5 V1532.5 Z" fill="#fff"/><circle cx="2781" cy="1516.1" r="17.9" fill="#7b82ee"/><path d="M2771.5,1516.1 H2790.5 M2781,1506.5 V1525.5" stroke="#fff" stroke-width="5"/>
<rect x="99.5" y="170.5" width="1224.5" height="75.5" rx="23" fill="#fbfbfe" stroke="#e8e8ee" stroke-width="1" filter="url(#cardsh)"/><circle cx="142.4" cy="208.3" r="18.3" fill="none" stroke="#7a7a7e" stroke-width="2"/><path d="M142.4,199.5 V211 M135.5,207.5 L142.4,214.8 L149.3,207.5" fill="none" stroke="#464a72" stroke-width="4" stroke-linejoin="round" stroke-linecap="round"/><text x="186" y="217" font-size="28" fill="#464a72" font-weight="bold" textLength="200.5" lengthAdjust="spacingAndGlyphs">Team Members</text><text x="397" y="217" font-size="22" fill="#777777" textLength="27" lengthAdjust="spacingAndGlyphs">(7)</text><circle cx="1126.4" cy="208.2" r="14.6" fill="none" stroke="#888888" stroke-width="1.8"/><path d="M1120,208.2 H1132 M1126.5,202.5 L1132.3,208.2 L1126.5,214" fill="none" stroke="#464a72" stroke-width="3.3"/><text x="1151.7" y="215.4" font-size="22" fill="#464a72" textLength="112" lengthAdjust="spacingAndGlyphs">Collapse all</text><rect x="99" y="254.3" width="1226" height="115.5" fill="#ffffff" filter="url(#cardsh)"/><rect x="99" y="380.3" width="1226" height="115.5" fill="#ffffff" filter="url(#cardsh)"/><rect x="99" y="506.3" width="1226" height="115.5" fill="#ffffff" filter="url(#cardsh)"/><rect x="99" y="632.3" width="1226" height="115.5" fill="#ffffff" filter="url(#cardsh)"/><rect x="99" y="758.3" width="1226" height="115.5" fill="#ffffff" filter="url(#cardsh)"/><rect x="99" y="884.3" width="1226" height="115.5" fill="#ffffff" filter="url(#cardsh)"/><rect x="99" y="1010.3" width="1226" height="115.5" fill="#ffffff" filter="url(#cardsh)"/>
<defs><filter id="avblur" x="-10%" y="-10%" width="120%" height="120%"><feGaussianBlur stdDeviation="1.1"/></filter><clipPath id="av0"><circle cx="0" cy="0" r="44.8"/></clipPath><clipPath id="av1"><circle cx="0" cy="0" r="44.8"/></clipPath><clipPath id="av2"><circle cx="0" cy="0" r="44.8"/></clipPath><clipPath id="av3"><circle cx="0" cy="0" r="44.8"/></clipPath><clipPath id="av4"><circle cx="0" cy="0" r="44.8"/></clipPath><clipPath id="av5"><circle cx="0" cy="0" r="44.8"/></clipPath><clipPath id="av6"><circle cx="0" cy="0" r="44.8"/></clipPath></defs><g transform="translate(197.9,313.9)"><g clip-path="url(#av0)"><g filter="url(#avblur)"><rect x="-46" y="-46" width="92" height="92" fill="#d5d2cd"/><path d="M-34,-4 C-40,-16 -36,-30 -22,-36 C-14,-44 4,-46 16,-40 C30,-36 40,-24 38,-10 C38,-2 34,4 28,2 C24,-6 20,-14 12,-18 L-12,-18 C-20,-14 -24,-6 -26,2 C-30,4 -32,0 -34,-4 Z" fill="#2a2420"/><path d="M-24,46 C-22,38 -12,34 -2,34 C8,34 16,38 18,46 Z" fill="#5e4a3e"/><ellipse cx="-2" cy="9" rx="17" ry="25" fill="#70503f"/><path d="M-18,-8 C-16,-18 -8,-22 0,-22 C10,-22 16,-17 16,-8 C10,-13 -10,-13 -18,-8 Z" fill="#2a2420"/><path d="M-12,14 C-8,26 6,26 10,14 C6,18 -8,18 -12,14 Z" fill="#3a2a22"/><ellipse cx="-2" cy="19" rx="6" ry="2.4" fill="#d8c8a0"/><ellipse cx="24" cy="18" rx="3" ry="5" fill="#2a2420"/><path d="M22,34 L34,46 L18,46 Z" fill="#c8c0b8"/></g></g></g><g transform="translate(197.9,439.9)"><g clip-path="url(#av1)"><g filter="url(#avblur)"><rect x="-46" y="-46" width="92" height="92" fill="#c6c7cb"/><path d="M-24,46 L-12,26 L8,40 L22,46 Z" fill="#a9bdd9"/><path d="M30,2 L46,0 L46,30 L26,24 Z" fill="#cdd8e6"/><ellipse cx="8" cy="3" rx="25" ry="36" transform="rotate(-28 8 3)" fill="#d9a98e"/><ellipse cx="7" cy="-30" rx="27" ry="14" transform="rotate(-15 7 -30)" fill="#9b7a4c"/><line x1="-17" y1="-3" x2="31" y2="-13" stroke="#6a5e58" stroke-width="5" opacity="0.6"/><ellipse cx="10" cy="16.5" rx="10" ry="3" transform="rotate(-15 10 16.5)" fill="#ffffff"/></g></g></g><g transform="translate(197.9,565.9)"><g clip-path="url(#av2)"><g filter="url(#avblur)"><rect x="-46" y="-46" width="92" height="92" fill="#f2f2f8"/><ellipse cx="2" cy="4" rx="34" ry="46" fill="#bf8a6a"/><path d="M14,-42 C30,-38 46,-20 46,0 L46,14 C36,16 30,4 28,-10 C26,-24 20,-34 14,-42 Z" fill="#3a2a22"/><path d="M-44,-20 C-38,-30 -30,-34 -26,-30 C-30,-22 -34,-18 -38,-10 Z" fill="#3a2a22"/><ellipse cx="-9" cy="23" rx="10" ry="4" fill="#f4ece8"/><ellipse cx="-26" cy="-9" rx="4" ry="2" fill="#5a3a2a"/><ellipse cx="-3" cy="-5" rx="5" ry="2" fill="#5a3a2a"/><path d="M-46,-6 C-36,0 -34,20 -16,46 L-46,46 Z" fill="#f2f2f8"/></g></g></g><g transform="translate(197.9,691.9)"><g clip-path="url(#av3)"><g filter="url(#avblur)"><rect x="-46" y="-46" width="92" height="92" fill="#f4f4f4"/><path d="M8,-18 C16,-16 20,-22 30,-18 C40,-14 46,-10 46,-4 L46,40 L-10,46 L0,10 Z" fill="#3a3a3a"/><path d="M-40,44 C-30,30 -10,22 10,22 C24,22 34,30 40,46 Z" fill="#6e6e6e"/><ellipse cx="-16" cy="3" rx="27" ry="33" fill="#9c9c9c"/><path d="M-36,-12 C-36,-34 -20,-42 -4,-42 C8,-40 12,-30 10,-6 L4,-6 C2,-20 -2,-24 -14,-24 C-26,-24 -32,-18 -36,-12 Z" fill="#333333"/><ellipse cx="-14" cy="16" rx="10" ry="3" fill="#e0e0e0"/></g></g></g><g transform="translate(197.9,817.9)"><g clip-path="url(#av4)"><g filter="url(#avblur)"><rect x="-46" y="-46" width="92" height="92" fill="#fdfdfe"/><path d="M-46,46 L-46,22 C-30,10 -14,8 -2,8 C12,8 28,10 46,22 L46,46 Z" fill="#e0eaf8"/><ellipse cx="2.5" cy="-16" rx="19" ry="25" fill="#3e2c24"/><rect x="-16" y="-22" width="38" height="11" fill="#9a9a9a" opacity="0.75"/><path d="M-2.5,11 L6,11 L7,46 L-3,46 Z" fill="#1a1a22"/><ellipse cx="2" cy="-2" rx="6" ry="3" fill="#c8a850" opacity="0.7"/></g></g></g><g transform="translate(197.9,943.9)"><g clip-path="url(#av5)"><g filter="url(#avblur)"><rect x="-46" y="-46" width="92" height="92" fill="#a8b0b8"/><path d="M-46,46 L-46,30 C-36,14 -20,8 -4,8 C14,8 34,14 46,26 L46,46 Z" fill="#dcd8ea"/><ellipse cx="-4" cy="-13" rx="16" ry="22" fill="#c9957a"/><path d="M-21,-22 C-22,-36 -12,-42 -3,-42 C8,-42 13,-34 11,-24 C6,-30 -12,-32 -21,-22 Z" fill="#3a2a22"/><path d="M-17,-8 C-14,4 -10,10 -3,10 C6,10 10,4 11,-8 C6,-2 -10,-2 -17,-8 Z" fill="#5a3a2a"/><ellipse cx="-1" cy="-3" rx="5" ry="2.5" fill="#d48080"/></g></g></g><g transform="translate(197.9,1069.9)"><g clip-path="url(#av6)"><g filter="url(#avblur)"><rect x="-46" y="-46" width="92" height="92" fill="#e4e7ee"/><rect x="10" y="-46" width="36" height="92" fill="#f2f2f4"/><ellipse cx="1" cy="-12" rx="24" ry="27" fill="#c8baa0"/><ellipse cx="-1.5" cy="-3" rx="15.5" ry="21" fill="#e4c0b0"/><path d="M-16,-18 C-12,-30 8,-34 20,-16 C10,-24 -6,-26 -16,-18 Z" fill="#d8ccb4"/><path d="M-46,46 L-42,32 C-30,22 -18,18 -8,17 L0,44 L8,17 C18,18 30,22 40,30 L46,46 Z" fill="#22222a"/><path d="M-9,17 L9,17 L2,44 L-2,44 Z" fill="#dcb0a0"/><ellipse cx="-2" cy="9" rx="7" ry="2.5" fill="#c87070"/></g></g></g>
<circle cx="197.9" cy="313.9" r="44.9" fill="none" stroke="#7f82f4" stroke-width="1.7"/><text x="262.4" y="321.6" font-size="28.5" fill="#1e1e1e" textLength="199" lengthAdjust="spacingAndGlyphs" stroke="#1e1e1e" stroke-width="0.35">Brandon Leland</text><text x="258" y="352.3" font-size="23" fill="#7d80f3" textLength="178" lengthAdjust="spacingAndGlyphs">Account Manager</text><text x="649" y="307.7" font-size="18" fill="#333333" text-anchor="end">1%</text><rect x="656.8" y="294.7" width="2.1" height="14.5" fill="#ff6a00"/><text x="649" y="332.9" font-size="18" fill="#333333" text-anchor="end">83%</text><rect x="656.8" y="319.9" width="149.4" height="14.5" fill="#fff11e"/><text x="649" y="358.1" font-size="18" fill="#333333" text-anchor="end">16%</text><rect x="656.8" y="345.1" width="28.8" height="14.5" fill="#00c800"/><text x="991.3" y="307.7" font-size="18" fill="#333333" text-anchor="end">100%</text><rect x="999.1" y="294.7" width="180.0" height="14.5" fill="#7b82ee"/><circle cx="197.9" cy="439.9" r="44.9" fill="none" stroke="#7f82f4" stroke-width="1.7"/><text x="262.4" y="447.6" font-size="28.5" fill="#1e1e1e" textLength="146.6" lengthAdjust="spacingAndGlyphs" stroke="#1e1e1e" stroke-width="0.35">Bryan Kurtz</text><text x="258" y="478.3" font-size="23" fill="#7d80f3" textLength="126.5" lengthAdjust="spacingAndGlyphs">Data Analyst</text><text x="649" y="433.7" font-size="18" fill="#333333" text-anchor="end">1%</text><rect x="656.8" y="420.7" width="2.1" height="14.5" fill="#ff6a00"/><text x="649" y="458.9" font-size="18" fill="#333333" text-anchor="end">51%</text><rect x="656.8" y="445.9" width="91.8" height="14.5" fill="#fff11e"/><text x="649" y="484.1" font-size="18" fill="#333333" text-anchor="end">48%</text><rect x="656.8" y="471.1" width="86.4" height="14.5" fill="#00c800"/><text x="991.3" y="433.7" font-size="18" fill="#333333" text-anchor="end">100%</text><rect x="999.1" y="420.7" width="180.0" height="14.5" fill="#7b82ee"/><circle cx="197.9" cy="565.9" r="44.9" fill="none" stroke="#7f82f4" stroke-width="1.7"/><text x="262.6" y="573.5" font-size="28.5" fill="#1e1e1e" textLength="160" lengthAdjust="spacingAndGlyphs" stroke="#1e1e1e" stroke-width="0.35">Elaine Porter</text><text x="649" y="559.7" font-size="18" fill="#333333" text-anchor="end">2%</text><rect x="656.8" y="546.7" width="3.6" height="14.5" fill="#ff6a00"/><text x="649" y="610.1" font-size="18" fill="#333333" text-anchor="end">98%</text><rect x="656.8" y="597.1" width="176.4" height="14.5" fill="#00c800"/><text x="991.3" y="559.7" font-size="18" fill="#333333" text-anchor="end">83%</text><rect x="999.1" y="546.7" width="149.4" height="14.5" fill="#7b82ee"/><text x="991.3" y="584.9" font-size="18" fill="#333333" text-anchor="end">17%</text><rect x="999.1" y="571.9" width="30.6" height="14.5" fill="#cccccc"/><circle cx="197.9" cy="691.9" r="44.9" fill="none" stroke="#7f82f4" stroke-width="1.7"/><text x="262.4" y="699.6" font-size="28.5" fill="#1e1e1e" textLength="147.6" lengthAdjust="spacingAndGlyphs" stroke="#1e1e1e" stroke-width="0.35">Fred  Callen</text><text x="258" y="730.3" font-size="23" fill="#7d80f3" textLength="184.8" lengthAdjust="spacingAndGlyphs">Program Manager</text><text x="649" y="685.7" font-size="18" fill="#333333" text-anchor="end">1%</text><rect x="656.8" y="672.7" width="2.1" height="14.5" fill="#ff6a00"/><text x="649" y="710.9" font-size="18" fill="#333333" text-anchor="end">61%</text><rect x="656.8" y="697.9" width="109.8" height="14.5" fill="#fff11e"/><text x="649" y="736.1" font-size="18" fill="#333333" text-anchor="end">38%</text><rect x="656.8" y="723.1" width="68.4" height="14.5" fill="#00c800"/><text x="991.3" y="685.7" font-size="18" fill="#333333" text-anchor="end">100%</text><rect x="999.1" y="672.7" width="180.0" height="14.5" fill="#7b82ee"/><circle cx="197.9" cy="817.9" r="44.9" fill="none" stroke="#7f82f4" stroke-width="1.7"/><text x="262.4" y="825.6" font-size="28.5" fill="#1e1e1e" textLength="144" lengthAdjust="spacingAndGlyphs" stroke="#1e1e1e" stroke-width="0.35">Gary Devlin</text><text x="258" y="856.3" font-size="23" fill="#7d80f3" textLength="156.6" lengthAdjust="spacingAndGlyphs">Change Analyst</text><text x="649" y="811.7" font-size="18" fill="#333333" text-anchor="end">1%</text><rect x="656.8" y="798.7" width="2.1" height="14.5" fill="#ff6a00"/><text x="649" y="836.9" font-size="18" fill="#333333" text-anchor="end">71%</text><rect x="656.8" y="823.9" width="127.8" height="14.5" fill="#fff11e"/><text x="649" y="862.1" font-size="18" fill="#333333" text-anchor="end">28%</text><rect x="656.8" y="849.1" width="50.4" height="14.5" fill="#00c800"/><text x="991.3" y="811.7" font-size="18" fill="#333333" text-anchor="end">100%</text><rect x="999.1" y="798.7" width="180.0" height="14.5" fill="#7b82ee"/><circle cx="197.9" cy="943.9" r="44.9" fill="none" stroke="#7f82f4" stroke-width="1.7"/><text x="262.4" y="951.6" font-size="28.5" fill="#1e1e1e" textLength="169.5" lengthAdjust="spacingAndGlyphs" stroke="#1e1e1e" stroke-width="0.35">Jack Somners</text><text x="258" y="982.3" font-size="23" fill="#7d80f3" textLength="151.4" lengthAdjust="spacingAndGlyphs">Quality Analyst</text><text x="649" y="937.7" font-size="18" fill="#333333" text-anchor="end">65%</text><rect x="656.8" y="924.7" width="117.0" height="14.5" fill="#ff6a00"/><text x="649" y="962.9" font-size="18" fill="#333333" text-anchor="end">2%</text><rect x="656.8" y="949.9" width="3.6" height="14.5" fill="#fff11e"/><text x="649" y="988.1" font-size="18" fill="#333333" text-anchor="end">33%</text><rect x="656.8" y="975.1" width="59.4" height="14.5" fill="#00c800"/><text x="991.3" y="937.7" font-size="18" fill="#333333" text-anchor="end">100%</text><rect x="999.1" y="924.7" width="180.0" height="14.5" fill="#7b82ee"/><circle cx="197.9" cy="1069.9" r="44.9" fill="none" stroke="#7f82f4" stroke-width="1.7"/><text x="262.4" y="1077.6" font-size="28.5" fill="#1e1e1e" textLength="166.6" lengthAdjust="spacingAndGlyphs" stroke="#1e1e1e" stroke-width="0.35">Lynn Engram</text><text x="258" y="1108.3" font-size="23" fill="#7d80f3" textLength="108.4" lengthAdjust="spacingAndGlyphs">HR Analyst</text><text x="649" y="1063.7" font-size="18" fill="#333333" text-anchor="end">1%</text><rect x="656.8" y="1050.7" width="2.1" height="14.5" fill="#ff6a00"/><text x="649" y="1088.9" font-size="18" fill="#333333" text-anchor="end">53%</text><rect x="656.8" y="1075.9" width="95.4" height="14.5" fill="#fff11e"/><text x="649" y="1114.1" font-size="18" fill="#333333" text-anchor="end">46%</text><rect x="656.8" y="1101.1" width="82.8" height="14.5" fill="#00c800"/><text x="991.3" y="1063.7" font-size="18" fill="#333333" text-anchor="end">100%</text><rect x="999.1" y="1050.7" width="180.0" height="14.5" fill="#7b82ee"/>
</svg>
<div class="lsh"></div>
<div class="bsh"></div>
</body></html>
